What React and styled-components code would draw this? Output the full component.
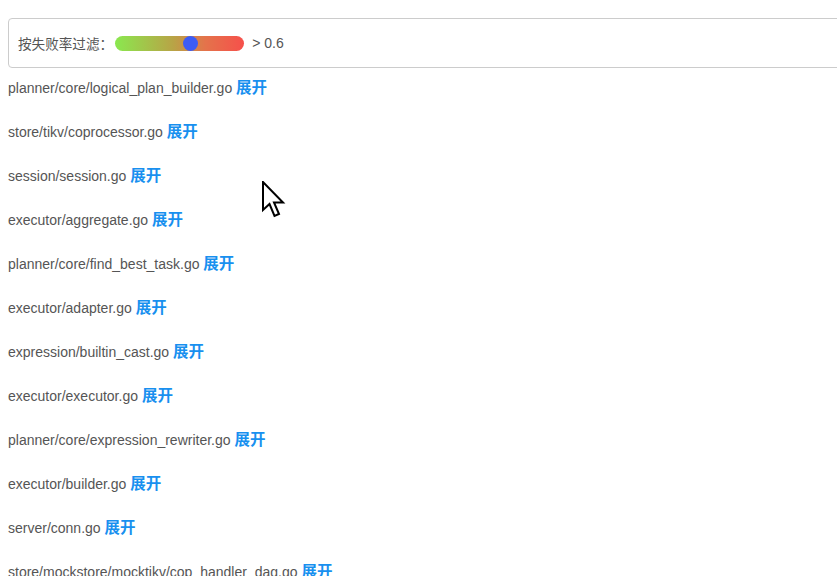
import React from 'react';
import styled, { createGlobalStyle } from 'styled-components';

const GlobalStyle = createGlobalStyle`
  html, body {
    margin: 0;
    padding: 0;
    overflow: hidden;
    background: #fff;
  }
  body {
    font-family: "Liberation Sans", Arial, "Noto Sans CJK SC", sans-serif;
    color: #555;
  }
`;

const Page = styled.div`
  position: relative;
  padding: 18px 0 0 8px;
  width: 837px;
  height: 576px;
  box-sizing: border-box;
  overflow: hidden;
`;

const FilterBox = styled.div`
  display: flex;
  align-items: center;
  box-sizing: border-box;
  width: 900px;
  height: 50px;
  padding: 0 9px;
  border: 1px solid #ccc;
  border-radius: 4px;
  font-size: 14px;
`;

const FilterLabel = styled.span`
  color: #555;
  font-size: 13.6px;
`;

const Slider = styled.div`
  position: relative;
  width: 129px;
  height: 15px;
  margin-left: 2px;
  border-radius: 8px;
  background: linear-gradient(to right, #8ae84f 0%, #b8a446 45%, #e4734b 70%, #f6504b 100%);
`;

const Thumb = styled.span`
  position: absolute;
  top: 0;
  width: 15px;
  height: 15px;
  border-radius: 50%;
  background: #3d5cf5;
`;

const Threshold = styled.span`
  margin-left: 8px;
  color: #555;
`;

const FileList = styled.div`
  display: flex;
  flex-direction: column;
  padding-top: 9px;
`;

const FileRow = styled.div`
  height: 44px;
  font-size: 14px;
  line-height: 22px;
  color: #555;
`;

const Expand = styled.a`
  color: #1890ef;
  font-size: 15.5px;
  font-weight: bold;
  text-decoration: none;
  cursor: pointer;
`;

const Cursor = styled.svg`
  position: absolute;
  left: 262px;
  top: 181px;
`;

const files = [
  'planner/core/logical_plan_builder.go',
  'store/tikv/coprocessor.go',
  'session/session.go',
  'executor/aggregate.go',
  'planner/core/find_best_task.go',
  'executor/adapter.go',
  'expression/builtin_cast.go',
  'executor/executor.go',
  'planner/core/expression_rewriter.go',
  'executor/builder.go',
  'server/conn.go',
  'store/mockstore/mocktikv/cop_handler_dag.go',
];

export default function App() {
  const value = 0.6;
  return (
    <Page>
      <GlobalStyle />
      <FilterBox>
        <FilterLabel>按失败率过滤：</FilterLabel>
        <Slider>
          <Thumb style={{ left: `${value * 125 - 7}px` }} />
        </Slider>
        <Threshold>&gt; {value}</Threshold>
      </FilterBox>
      <FileList>
        {files.map((f) => (
          <FileRow key={f}>
            {f} <Expand>展开</Expand>
          </FileRow>
        ))}
      </FileList>
      <Cursor width="26" height="40" viewBox="0 0 26 40">
        <path
          d="M1 1 L1 29 L7.5 23 L12.5 35 L17 33 L12 21.5 L21 21.5 Z"
          fill="#fff"
          stroke="#000"
          strokeWidth="2"
          strokeLinejoin="miter"
        />
      </Cursor>
    </Page>
  );
}
